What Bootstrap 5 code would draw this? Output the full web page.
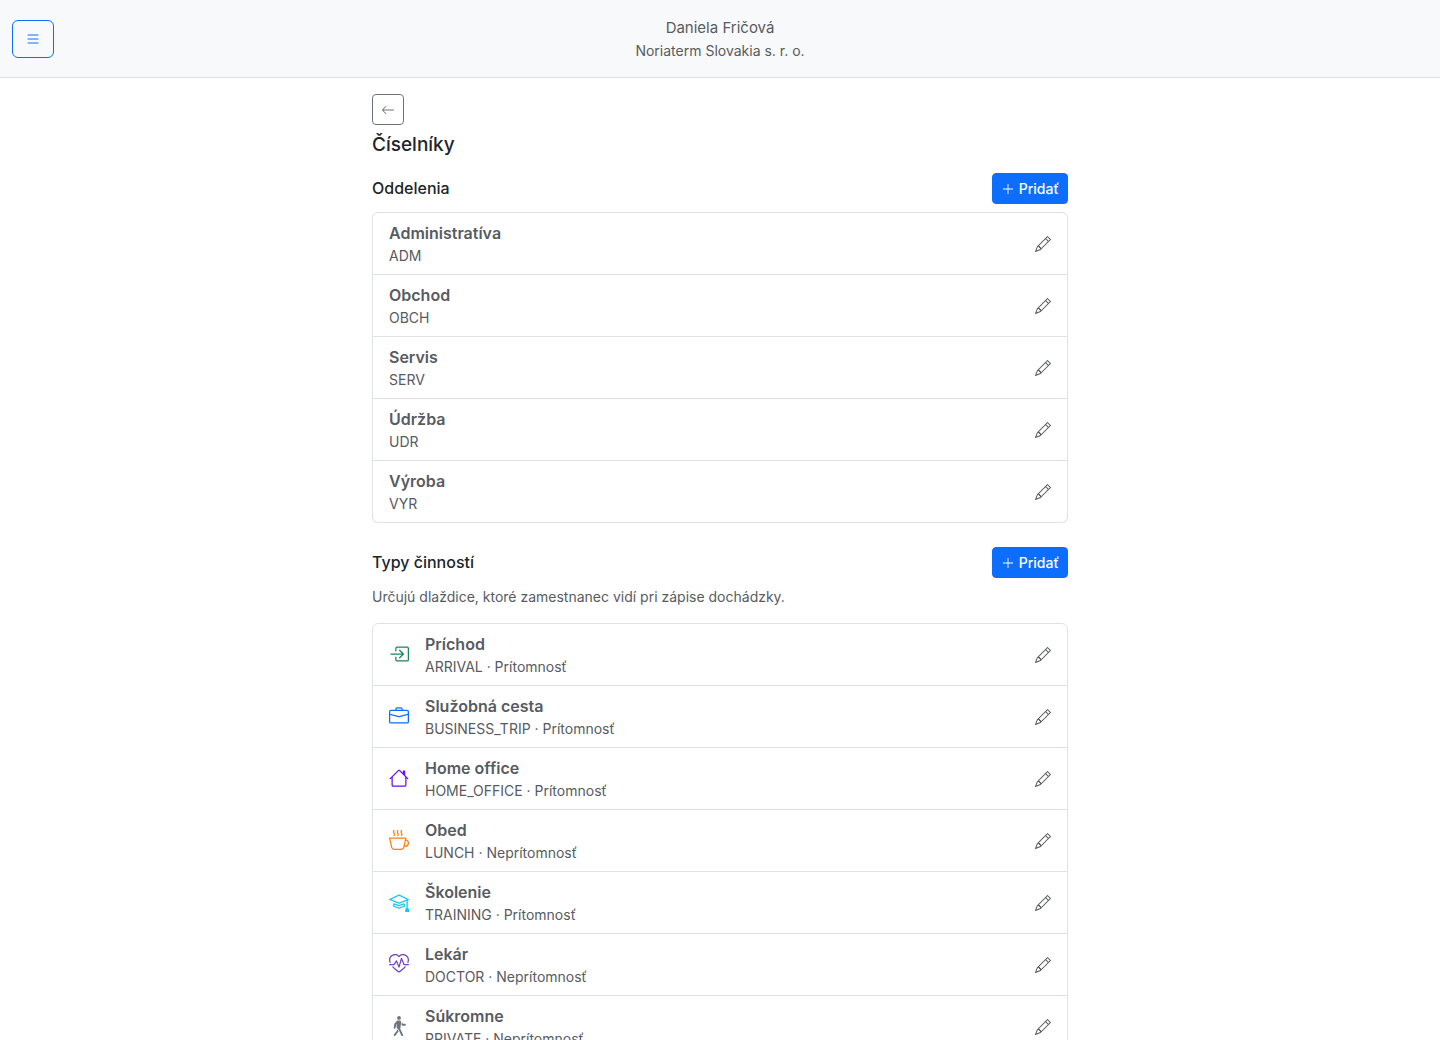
<!DOCTYPE html>
<html lang="sk">
<head>
<meta charset="utf-8">
<meta name="viewport" content="width=device-width, initial-scale=1">
<title>Číselníky</title>
<link href="https://cdn.jsdelivr.net/npm/bootstrap@5.3.0/dist/css/bootstrap.min.css" rel="stylesheet">
<style>
  body { font-family: Inter, "Liberation Sans", sans-serif; color: #212529; }
  .page-column { max-width: 720px; }
  .topbar, .topbar .person, .entry, .hint { color: #585b5f; }
  .entry:hover, .entry:focus { color: #585b5f; }
  .person { font-size: 15px; line-height: 24px; }
  .subline { font-size: 14px; line-height: 21px; }
  .entry-name { font-weight: 600; }
  .page-title, .section-title { font-weight: 500; }
  .page-title { font-size: 19px; line-height: 24px; }
  .btn-add { font-weight: 500; }
  .ico { width: 16px; height: 16px; fill: currentColor; flex: none; display: block; }
  .ico-sm { width: 14px; height: 14px; }
  .ico-lg { width: 20px; height: 20px; box-sizing: content-box; padding-bottom: 2px; }
  .c-green { color: #198754; }
  .c-blue { color: #0d6efd; }
  .c-indigo { color: #6610f2; }
  .c-orange { color: #fd7e14; }
  .c-cyan { color: #0dcaf0; }
  .c-purple { color: #6f42c1; }
  .c-gray { color: #6c757d; }
  .menu-toggle { height: 38px; }
  .btn-low { height: 31px; }
</style>
<script src="https://cdn.jsdelivr.net/npm/bootstrap@5.3.0/dist/js/bootstrap.bundle.min.js" defer></script>
</head>
<body>
<svg class="d-none" aria-hidden="true">
  <symbol id="i-list" viewBox="0 0 16 16"><path fill-rule="evenodd" d="M2.5 12a.5.5 0 0 1 .5-.5h10a.5.5 0 0 1 0 1H3a.5.5 0 0 1-.5-.5m0-4a.5.5 0 0 1 .5-.5h10a.5.5 0 0 1 0 1H3a.5.5 0 0 1-.5-.5m0-4a.5.5 0 0 1 .5-.5h10a.5.5 0 0 1 0 1H3a.5.5 0 0 1-.5-.5"/></symbol>
  <symbol id="i-back" viewBox="0 0 16 16"><path fill-rule="evenodd" d="M15 8a.5.5 0 0 0-.5-.5H2.707l3.147-3.146a.5.5 0 1 0-.708-.708l-4 4a.5.5 0 0 0 0 .708l4 4a.5.5 0 0 0 .708-.708L2.707 8.5H14.5A.5.5 0 0 0 15 8"/></symbol>
  <symbol id="i-plus" viewBox="0 0 16 16"><path fill-rule="evenodd" d="M8 2a.5.5 0 0 1 .5.5v5h5a.5.5 0 0 1 0 1h-5v5a.5.5 0 0 1-1 0v-5h-5a.5.5 0 0 1 0-1h5v-5A.5.5 0 0 1 8 2"/></symbol>
  <symbol id="i-pencil" viewBox="0 0 16 16"><path d="M12.146.146a.5.5 0 0 1 .708 0l3 3a.5.5 0 0 1 0 .708l-10 10a.5.5 0 0 1-.168.11l-5 2a.5.5 0 0 1-.65-.65l2-5a.5.5 0 0 1 .11-.168zM11.207 2.5 13.5 4.793 14.793 3.5 12.5 1.207zm1.586 3L10.5 3.207 4 9.707V10h.5a.5.5 0 0 1 .5.5v.5h.5a.5.5 0 0 1 .5.5v.5h.293zm-9.761 5.175-.106.106-1.528 3.821 3.821-1.528.106-.106A.5.5 0 0 1 5 12.5V12h-.5a.5.5 0 0 1-.5-.5V11h-.5a.5.5 0 0 1-.468-.325"/></symbol>
  <symbol id="i-enter" viewBox="0 0 16 16"><path fill-rule="evenodd" d="M6 3.5a.5.5 0 0 1 .5-.5h8a.5.5 0 0 1 .5.5v9a.5.5 0 0 1-.5.5h-8a.5.5 0 0 1-.5-.5v-2a.5.5 0 0 0-1 0v2A1.5 1.5 0 0 0 6.5 14h8a1.5 1.5 0 0 0 1.5-1.5v-9A1.5 1.5 0 0 0 14.5 2h-8A1.5 1.5 0 0 0 5 3.5v2a.5.5 0 0 0 1 0z"/><path fill-rule="evenodd" d="M11.854 8.354a.5.5 0 0 0 0-.708l-3-3a.5.5 0 1 0-.708.708L10.293 7.5H1.5a.5.5 0 0 0 0 1h8.793l-2.147 2.146a.5.5 0 0 0 .708.708z"/></symbol>
  <symbol id="i-briefcase" viewBox="0 0 16 16"><path d="M6.500 1A1.500 1.500 0 0 0 5 2.500V3H1.500A1.500 1.500 0 0 0 0 4.500v8A1.500 1.500 0 0 0 1.500 14h13a1.500 1.500 0 0 0 1.500-1.500v-8A1.500 1.500 0 0 0 14.500 3H11v-.5A1.500 1.500 0 0 0 9.500 1zm0 1h3a.5.5 0 0 1 .5.5V3H6v-.5a.5.5 0 0 1 .5-.5m1.886 6.914L15 7.151V12.500a.5.5 0 0 1-.5.5h-13a.5.5 0 0 1-.5-.5V7.150l6.614 1.764a1.500 1.500 0 0 0 .772 0M1.500 4h13a.5.5 0 0 1 .5.5v1.616L8.129 7.948a.5.5 0 0 1-.258 0L1 6.116V4.500a.5.5 0 0 1 .5-.5"/></symbol>
  <symbol id="i-house" viewBox="0 0 16 16"><path d="M8.707 1.5a1 1 0 0 0-1.414 0L.646 8.146a.5.5 0 0 0 .708.708L2 8.207V13.5A1.5 1.5 0 0 0 3.5 15h9a1.5 1.5 0 0 0 1.5-1.5V8.207l.646.647a.5.5 0 0 0 .708-.708L13 5.793V2.5a.5.5 0 0 0-.5-.5h-1a.5.5 0 0 0-.5.5v1.293zM13 7.207V13.5a.5.5 0 0 1-.5.5h-9a.5.5 0 0 1-.5-.5V7.207l5-5z"/></symbol>
  <symbol id="i-cup" viewBox="0 0 16 16"><path fill-rule="evenodd" d="M.5 6a.5.5 0 0 0-.488.608l1.652 7.434A2.5 2.5 0 0 0 4.104 16h5.792a2.5 2.5 0 0 0 2.44-1.958l.131-.59a3 3 0 0 0 1.3-5.854l.221-.99A.5.5 0 0 0 13.5 6zM13 12.5a2 2 0 0 1-.316-.025l.867-3.898A2.001 2.001 0 0 1 13 12.5M2.64 13.825 1.123 7h11.754l-1.517 6.825A1.5 1.5 0 0 1 9.896 15H4.104a1.5 1.5 0 0 1-1.464-1.175"/><g fill="none" stroke="currentColor" stroke-linecap="round"><path d="M4 .5C3.200 1.600 3.400 1.700 4 2.500S4.800 3.400 4 4.500"/><path d="M7 .5C6.200 1.600 6.400 1.700 7 2.500S7.800 3.400 7 4.500"/><path d="M10 .5C9.200 1.600 9.400 1.700 10 2.500S10.800 3.400 10 4.500"/></g></symbol>
  <symbol id="i-school" viewBox="0 0 16 16"><path d="M8.211 2.047a.5.5 0 0 0-.422 0l-7.5 3.5a.5.5 0 0 0 .025.917l7.5 3a.5.5 0 0 0 .372 0L14 7.14V13a1 1 0 0 0-1 1v2h3v-2a1 1 0 0 0-1-1V6.739l.686-.275a.5.5 0 0 0 .025-.917zM8 8.46 1.758 5.965 8 3.052l6.242 2.913z"/><path d="M4.176 9.032a.5.5 0 0 0-.656.327l-.5 1.7a.5.5 0 0 0 .294.605l4.5 1.8a.5.5 0 0 0 .372 0l4.5-1.8a.5.5 0 0 0 .294-.605l-.5-1.7a.5.5 0 0 0-.656-.327L8 10.466zm-.068 1.873.22-.748 3.496 1.311a.5.5 0 0 0 .352 0l3.496-1.311.22.748L8 12.46z"/></symbol>
  <symbol id="i-heart" viewBox="0 0 16 16"><path d="m8 2.748-.717-.737C5.6.281 2.514.878 1.4 3.053.918 3.995.78 5.323 1.508 7H.43c-2.128-5.697 4.165-8.83 7.394-5.857q.09.083.176.171a3 3 0 0 1 .176-.17c3.23-2.974 9.522.159 7.394 5.856h-1.078c.728-1.677.59-3.005.108-3.947C13.486.878 10.4.28 8.717 2.01zM2.212 10h1.315C4.593 11.183 6.05 12.458 8 13.795c1.949-1.337 3.407-2.612 4.473-3.795h1.315c-1.265 1.566-3.14 3.25-5.788 5-2.648-1.75-4.523-3.434-5.788-5"/><path d="M10.464 3.314a.5.5 0 0 0-.945.049L7.921 8.956 6.464 5.314a.5.5 0 0 0-.88-.091L3.732 8H.5a.5.5 0 0 0 0 1H4a.5.5 0 0 0 .416-.223l1.473-2.209 1.647 4.118a.5.5 0 0 0 .945-.049l1.598-5.593 1.457 3.642A.5.5 0 0 0 12 9h3.5a.5.5 0 0 0 0-1h-3.162z"/></symbol>
  <symbol id="i-walk" viewBox="0 0 16 16"><path d="M9.5 1.5a1.5 1.5 0 1 1-3 0 1.5 1.5 0 0 1 3 0M6.44 3.752A.75.75 0 0 1 7 3.5h1.445c.742 0 1.32.643 1.243 1.38l-.43 4.083a1.8 1.8 0 0 1-.088.395l-.318.906.213.242a.8.8 0 0 1 .114.175l2 4.25a.75.75 0 1 1-1.357.638l-1.956-4.154-1.68-1.921A.75.75 0 0 1 6 8.96l.138-2.613-.435.489-.464 2.786a.75.75 0 1 1-1.48-.246l.5-3a.75.75 0 0 1 .18-.375l2-2.25Z"/><path d="M6.25 11.745v-1.418l1.204 1.375.261.524a.8.8 0 0 1-.12.231l-2.5 3.25a.75.75 0 1 1-1.19-.914zm4.22-4.215-.494-.494.205-1.843.006-.067 1.124 1.124h1.44a.75.75 0 0 1 0 1.5H11a.75.75 0 0 1-.531-.22Z"/></symbol>
</svg>

<header class="topbar bg-light border-bottom container-fluid py-3">
  <div class="row align-items-center">
    <div class="col d-flex">
      <button type="button" class="btn btn-outline-primary menu-toggle d-flex align-items-center" aria-label="Menu"><svg class="ico"><use href="#i-list"/></svg></button>
    </div>
    <div class="col-auto text-center">
      <div class="person">Daniela Fričová</div>
      <div class="subline">Noriaterm Slovakia s. r. o.</div>
    </div>
    <div class="col"></div>
  </div>
</header>

<main class="container-fluid page-column py-3">
  <div class="d-flex mb-2">
    <a href="#" class="btn btn-sm btn-outline-secondary btn-low d-flex align-items-center" aria-label="Späť"><svg class="ico ico-sm"><use href="#i-back"/></svg></a>
  </div>
  <h1 class="page-title mb-3">Číselníky</h1>

  <section class="mb-4">
    <div class="d-flex justify-content-between align-items-center mb-2">
      <h2 class="section-title fs-6 mb-0">Oddelenia</h2>
      <button type="button" class="btn btn-sm btn-primary btn-add btn-low d-flex align-items-center gap-1"><svg class="ico ico-sm"><use href="#i-plus"/></svg>Pridať</button>
    </div>
    <div class="list-group">
      <a href="#" class="entry list-group-item list-group-item-action d-flex align-items-center justify-content-between"><div><div class="entry-name">Administratíva</div><div class="subline">ADM</div></div><svg class="ico"><use href="#i-pencil"/></svg></a>
      <a href="#" class="entry list-group-item list-group-item-action d-flex align-items-center justify-content-between"><div><div class="entry-name">Obchod</div><div class="subline">OBCH</div></div><svg class="ico"><use href="#i-pencil"/></svg></a>
      <a href="#" class="entry list-group-item list-group-item-action d-flex align-items-center justify-content-between"><div><div class="entry-name">Servis</div><div class="subline">SERV</div></div><svg class="ico"><use href="#i-pencil"/></svg></a>
      <a href="#" class="entry list-group-item list-group-item-action d-flex align-items-center justify-content-between"><div><div class="entry-name">Údržba</div><div class="subline">UDR</div></div><svg class="ico"><use href="#i-pencil"/></svg></a>
      <a href="#" class="entry list-group-item list-group-item-action d-flex align-items-center justify-content-between"><div><div class="entry-name">Výroba</div><div class="subline">VYR</div></div><svg class="ico"><use href="#i-pencil"/></svg></a>
    </div>
  </section>

  <section>
    <div class="d-flex justify-content-between align-items-center mb-2">
      <h2 class="section-title fs-6 mb-0">Typy činností</h2>
      <button type="button" class="btn btn-sm btn-primary btn-add btn-low d-flex align-items-center gap-1"><svg class="ico ico-sm"><use href="#i-plus"/></svg>Pridať</button>
    </div>
    <p class="hint subline mb-3">Určujú dlaždice, ktoré zamestnanec vidí pri zápise dochádzky.</p>
    <div class="list-group">
      <a href="#" class="entry list-group-item list-group-item-action d-flex align-items-center gap-3"><svg class="ico ico-lg c-green"><use href="#i-enter"/></svg><div class="flex-fill"><div class="entry-name">Príchod</div><div class="subline">ARRIVAL · Prítomnosť</div></div><svg class="ico"><use href="#i-pencil"/></svg></a>
      <a href="#" class="entry list-group-item list-group-item-action d-flex align-items-center gap-3"><svg class="ico ico-lg c-blue"><use href="#i-briefcase"/></svg><div class="flex-fill"><div class="entry-name">Služobná cesta</div><div class="subline">BUSINESS_TRIP · Prítomnosť</div></div><svg class="ico"><use href="#i-pencil"/></svg></a>
      <a href="#" class="entry list-group-item list-group-item-action d-flex align-items-center gap-3"><svg class="ico ico-lg c-indigo"><use href="#i-house"/></svg><div class="flex-fill"><div class="entry-name">Home office</div><div class="subline">HOME_OFFICE · Prítomnosť</div></div><svg class="ico"><use href="#i-pencil"/></svg></a>
      <a href="#" class="entry list-group-item list-group-item-action d-flex align-items-center gap-3"><svg class="ico ico-lg c-orange"><use href="#i-cup"/></svg><div class="flex-fill"><div class="entry-name">Obed</div><div class="subline">LUNCH · Neprítomnosť</div></div><svg class="ico"><use href="#i-pencil"/></svg></a>
      <a href="#" class="entry list-group-item list-group-item-action d-flex align-items-center gap-3"><svg class="ico ico-lg c-cyan"><use href="#i-school"/></svg><div class="flex-fill"><div class="entry-name">Školenie</div><div class="subline">TRAINING · Prítomnosť</div></div><svg class="ico"><use href="#i-pencil"/></svg></a>
      <a href="#" class="entry list-group-item list-group-item-action d-flex align-items-center gap-3"><svg class="ico ico-lg c-purple"><use href="#i-heart"/></svg><div class="flex-fill"><div class="entry-name">Lekár</div><div class="subline">DOCTOR · Neprítomnosť</div></div><svg class="ico"><use href="#i-pencil"/></svg></a>
      <a href="#" class="entry list-group-item list-group-item-action d-flex align-items-center gap-3"><svg class="ico ico-lg c-gray"><use href="#i-walk"/></svg><div class="flex-fill"><div class="entry-name">Súkromne</div><div class="subline">PRIVATE · Neprítomnosť</div></div><svg class="ico"><use href="#i-pencil"/></svg></a>
    </div>
  </section>
</main>
</body>
</html>
